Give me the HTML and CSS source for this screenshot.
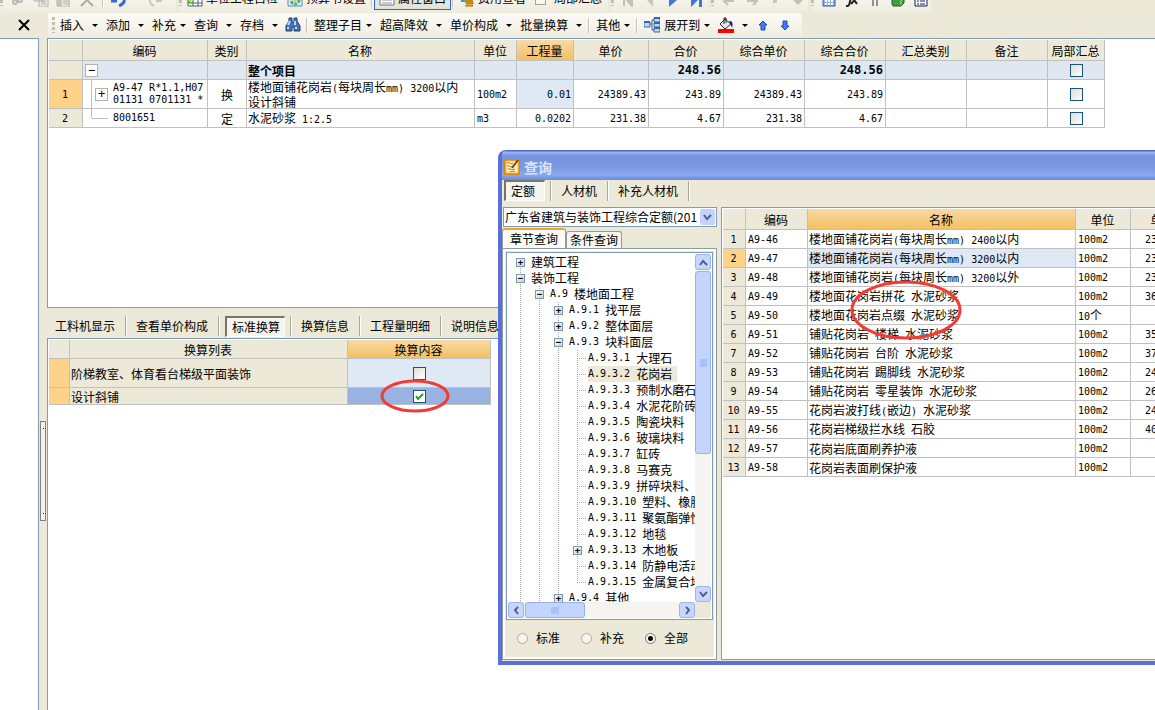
FILE: index.html
```html
<!DOCTYPE html>
<html lang="zh-CN">
<head>
<meta charset="utf-8">
<title>查询</title>
<link rel="stylesheet" href="styles.css">
</head>
<body>
<div class="app">
  <div class="strip">
    <div class="bar bar-top bar-first">
      <span class="grip"></span>
      <svg class="ic" viewBox="0 0 16 16"><path d="M6 0v9M10 0v7" stroke="#bbb9ae" stroke-width="2"/><circle cx="5" cy="11" r="2" fill="none" stroke="#bbb9ae" stroke-width="2"/><circle cx="10" cy="9" r="2" fill="none" stroke="#bbb9ae" stroke-width="2"/></svg>
      <svg class="ic" viewBox="0 0 16 16"><path d="M1 2h9v8H1zM6 6h9v10H6z" fill="#eceade" stroke="#b5b3a8"/><path d="M8 9h5M8 11h5M8 13h5" stroke="#b5b3a8"/></svg>
      <svg class="ic" viewBox="0 0 16 16"><path d="M1 1h12v14H1z" fill="#c9c7bc" stroke="#b5b3a8"/><path d="M5 5h8v11H5z" fill="#eceade" stroke="#b5b3a8"/><path d="M7 9h5M7 11h5M7 13h5" stroke="#b5b3a8"/></svg>
      <svg class="ic" viewBox="0 0 16 16"><path d="M2 3l12 12M14 3L2 15" stroke="#aeaca2" stroke-width="2"/></svg>
      <span class="sep"></span>
      <svg class="ic" viewBox="0 0 16 16"><path d="M1 5v5h5M2 10c4-6 13-6 11 1-1 2-3 3-5 4" stroke="#3169d6" stroke-width="3" fill="none"/></svg>
      <span class="arrow"></span>
      <svg class="ic" viewBox="0 0 16 16"><path d="M14 5v5H9M13 9C8 4 2 6 3 10c0 2 2 4 4 5" stroke="#c9c7bc" stroke-width="2" fill="none"/></svg>
      <span class="arrow dim"></span>
    </div>
    <div class="bar bar-top">
      <span class="grip"></span>
      <button class="tool"><svg class="ic" viewBox="0 0 16 16"><path d="M1 2h14v13H1z" fill="#fff" stroke="#55606f"/><path d="M1 12h14M6 2v13M11 2v13M1 8h14" stroke="#55606f"/><path d="M1 6h5v6H1z" fill="#6bb03c"/><path d="M2 9l2 2 2-4" stroke="#fff" fill="none"/></svg>单位工程自检</button>
      <button class="tool"><svg class="ic" viewBox="0 0 16 16"><path d="M1 1h14v14H1z" fill="#e9f3fb" stroke="#4f87c4"/><circle cx="8" cy="9" r="4" fill="none" stroke="#58ad63" stroke-width="3" stroke-dasharray="3 1"/><circle cx="8" cy="9" r="2" fill="#a9d9ab"/></svg>预算书设置</button>
      <span class="sep"></span>
      <button class="tool framed"><svg class="ic" viewBox="0 0 16 16"><path d="M1 1h14v13H1z" fill="#fff" stroke="#6f7785"/><path d="M3 7h10M3 9h10M3 12h10" stroke="#8e959f"/></svg>属性窗口</button>
      <span class="sep"></span>
      <button class="tool"><svg class="ic" viewBox="0 0 16 16"><path d="M2 5h7v6H2z" fill="#3f93d1"/><path d="M5 7h9v8H7z" fill="#e3ac35"/><path d="M6 10h8M7 12h8M6 15h8" stroke="#9c6a13"/></svg>费用查看</button>
      <label class="tool check-tool"><input type="checkbox" class="plain">局部汇总</label>
    </div>
    <div class="bar bar-top nav">
      <span class="grip"></span>
      <svg class="ic" viewBox="0 0 16 16"><path d="M3 4v11M11 4v11L5 8z" fill="#c3c1b6" stroke="#c3c1b6" stroke-width="2"/></svg>
      <svg class="ic" viewBox="0 0 16 16"><path d="M9 3v13L3 9z" fill="#c9c7bc"/></svg>
      <svg class="ic" viewBox="0 0 16 16"><path d="M2 3v13l8-7z" fill="#3f78d8"/></svg>
      <svg class="ic" viewBox="0 0 16 16"><path d="M1 3v13l7-7zM9 3h3v13H9z" fill="#3f78d8"/></svg>
    </div>
    <div class="bar bar-top nav">
      <span class="grip"></span>
      <svg class="ic" viewBox="0 0 16 16"><path d="M3 10h10M7 6l-4 4 4 4" stroke="#c3c1b6" stroke-width="2" fill="none"/></svg>
      <svg class="ic" viewBox="0 0 16 16"><path d="M3 10h10M9 6l4 4-4 4" stroke="#c3c1b6" stroke-width="2" fill="none"/></svg>
      <svg class="ic" viewBox="0 0 16 16"><path d="M6 3h4v9H6z" fill="#c9c7bc"/></svg>
      <svg class="ic" viewBox="0 0 16 16"><path d="M3 9h10l-5 5z" fill="#c3c1b6"/></svg>
    </div>
    <div class="bar bar-top nav">
      <span class="grip"></span>
      <svg class="ic" viewBox="0 0 16 16"><path d="M2 1h12v14H2z" fill="#8fb2e6" stroke="#3a5a9c"/><path d="M4 7h8M4 10h8M4 13h8" stroke="#fff" stroke-width="2" stroke-dasharray="2 1"/></svg>
      <svg class="ic" viewBox="0 0 16 16"><path d="M2 15c5 1 3-6 6-11M8 6l5 7M13 6l-6 7" stroke="#222" stroke-width="2" fill="none"/></svg>
      <svg class="ic" viewBox="0 0 16 16"><path d="M6 5v10M10 5v10M4 5h8" stroke="#333"/></svg>
      <svg class="ic" viewBox="0 0 16 16"><path d="M2 4l9-2 3 2v8l-3 3H3l-1-2z" fill="#3f9d43" stroke="#1f5c26"/><path d="M11 5v9" stroke="#a9dca8"/></svg>
      <svg class="ic" viewBox="0 0 16 16"><path d="M2 2h12v13H2z" fill="#fff" stroke="#111a66"/><path d="M4 7h2M7 7h5M4 10h2M7 10h5M4 13h2M7 13h5" stroke="#111a66"/></svg>
    </div>
  </div>

  <div class="toolrow">
    <button class="closer" aria-label="关闭"><svg width="14" height="14" viewBox="0 0 14 14"><path d="M2 2l10 10M12 2L2 12" stroke="#000" stroke-width="2"/></svg></button>
    <div class="bar bar-main">
      <span class="grip"></span>
      <button class="tool">插入<span class="arrow"></span></button>
      <button class="tool">添加<span class="arrow"></span></button>
      <button class="tool tight">补充<span class="arrow"></span></button>
      <button class="tool">查询<span class="arrow"></span></button>
      <button class="tool">存档<span class="arrow"></span></button>
      <button class="tool slim" aria-label="查找"><svg class="ic" viewBox="0 0 16 16"><path d="M4 1h3v3l1 2 1-2V1h3v3l3 5v5H9v-4H7v4H1V9l3-5z" fill="#4672b4" stroke="#20427c"/><path d="M3 8l2-4M10 8V4M3 12v-2M11 12v-2" stroke="#bcd8f6" stroke-width="2"/></svg></button>
      <span class="sep"></span>
      <button class="tool tight">整理子目<span class="arrow"></span></button>
      <button class="tool">超高降效<span class="arrow"></span></button>
      <button class="tool">单价构成<span class="arrow"></span></button>
      <button class="tool">批量换算<span class="arrow"></span></button>
      <span class="sep"></span>
      <button class="tool tight">其他<span class="arrow"></span></button>
      <span class="sep"></span>
      <button class="tool tight"><svg class="ic" viewBox="0 0 16 16"><path d="M6 7h2M8 3v10M8 3h2M8 13h2" stroke="#3a62a8" fill="none"/><path d="M0 5h6v5H0zM10 1h6v4h-6zM10 6h6v4h-6zM10 11h6v4h-6z" fill="#b9dcf8" stroke="#3a62a8"/><path d="M0 5h6M10 1h6M10 6h6M10 11h6" stroke="#3a62a8" stroke-width="2"/></svg>展开到<span class="arrow"></span></button>
      <button class="tool" aria-label="填充颜色"><svg class="ic" viewBox="0 0 16 16"><path d="M7 2l6 5-6 5-5-5z" fill="#e8e8e8" stroke="#222"/><path d="M6 7V1h2v5" stroke="#222" fill="none"/><path d="M12 4c3 0 3 4 2 7-1-2-1-4-3-6z" fill="#12248f"/><path d="M0 12h16v4H0z" fill="#f00"/></svg><span class="arrow"></span></button>
      <button class="tool slim" aria-label="上移"><svg class="ic" viewBox="0 0 16 16"><path d="M8 4l4 4h-2v5H6V8H4z" fill="#3f7df0" stroke="#1c4bb0"/></svg></button>
      <button class="tool slim" aria-label="下移"><svg class="ic" viewBox="0 0 16 16"><path d="M8 13l4-4h-2V4H6v5H4z" fill="#3f7df0" stroke="#1c4bb0"/></svg></button>
    </div>
  </div>

  <div class="work">
    <div class="side"></div>
    <div class="split"><div class="handle"><i></i><i></i></div></div>
    <main class="main">
      <section class="panel upper">
        <table class="grid items">
          <colgroup><col class="w34"><col class="w125"><col class="w39"><col class="w228"><col class="w42"><col class="w57"><col class="w75"><col class="w75"><col class="w81"><col class="w81"><col class="w81"><col class="w81"><col class="w57"></colgroup>
          <tr class="h21"><th></th><th>编码</th><th>类别</th><th>名称</th><th>单位</th><th class="hot">工程量</th><th>单价</th><th>合价</th><th>综合单价</th><th>综合合价</th><th>汇总类别</th><th>备注</th><th>局部汇总</th></tr>
          <tr class="h19 total"><th></th><td><button class="box big in1" aria-label="折叠">−</button></td><td></td><td><b>整个项目</b></td><td></td><td></td><td></td><td class="num">248.56</td><td></td><td class="num">248.56</td><td></td><td></td><td class="mid"><input type="checkbox" aria-label="局部汇总"></td></tr>
          <tr class="h29"><th class="pick m">1</th><td class="branch"><div class="codecell"><button class="box big in2" aria-label="展开">+</button><span class="m">A9-47 R*1.1,H07<br>01131 0701131 *</span></div></td><td class="mid">换</td><td class="two">楼地面铺花岗岩<span class="m">(</span>每块周长<span class="m">mm) 3200</span>以内<br>设计斜铺</td><td class="m">100m2</td><td class="num soft">0.01</td><td class="num">24389.43</td><td class="num">243.89</td><td class="num">24389.43</td><td class="num">243.89</td><td></td><td></td><td class="mid"><input type="checkbox" aria-label="局部汇总"></td></tr>
          <tr class="h19"><th class="m">2</th><td class="branch leaf"><div class="codecell"><i class="stub"></i><span class="m">8001651</span></div></td><td class="mid">定</td><td>水泥砂浆<span class="m"> 1:2.5</span></td><td class="m">m3</td><td class="num">0.0202</td><td class="num">231.38</td><td class="num">4.67</td><td class="num">231.38</td><td class="num">4.67</td><td></td><td></td><td class="mid"><input type="checkbox" aria-label="局部汇总"></td></tr>
        </table>
      </section>
      <nav class="tabs low">
        <button>工料机显示</button><button>查看单价构成</button><button class="on">标准换算</button><button>换算信息</button><button>工程量明细</button><button>说明信息</button>
      </nav>
      <section class="panel lower">
        <table class="grid conv">
          <colgroup><col class="w21"><col class="w278"><col class="w143"></colgroup>
          <tr class="h19"><th></th><th>换算列表</th><th class="hot">换算内容</th></tr>
          <tr class="h29"><th class="pick"></th><td class="beige"><label for="c1">阶梯教室、体育看台梯级平面装饰</label></td><td class="mid soft"><input type="checkbox" id="c1"></td></tr>
          <tr class="h17"><th class="pick"></th><td class="beige"><label for="c2">设计斜铺</label></td><td class="mid sel"><input type="checkbox" id="c2" checked></td></tr>
        </table>
      </section>
    </main>
  </div>

  <div class="dialog" role="dialog" aria-labelledby="dlg">
    <header class="title">
      <svg class="ic" viewBox="0 0 16 16"><path d="M0 0h16v16H0z" fill="#d98a12"/><path d="M2 2h12v12H2z" fill="#fff3cf" stroke="#f0bc45"/><path d="M3 4c3-1 3 2 6 0M3 7c3-1 3 2 6 0M4 10c3-1 3 2 7 0M6 13c2-1 3 0 5-1" stroke="#b86b0b" fill="none" stroke-width="1"/><path d="M14 1L8 9" stroke="#8b3f05" stroke-width="2"/></svg>
      <span id="dlg">查询</span>
    </header>
    <div class="dbody">
      <nav class="tabs top"><button class="on">定额</button><button>人材机</button><button>补充人材机</button></nav>
      <div class="cols">
        <div class="left">
          <div class="combo">
            <select aria-label="定额库"><option>广东省建筑与装饰工程综合定额(201</option></select>
            <span class="drop"><svg width="9" height="7" viewBox="0 0 9 7"><path d="M1 1l3 4 4-4" fill="none" stroke="#4d6185" stroke-width="2"/></svg></span>
          </div>
          <div class="ptabs"><button class="cur">章节查询</button><button>条件查询</button></div>
          <div class="pane">
            <div class="treebox">
              <div class="treerow">
                <ul class="tree">
                  <li class="first"><div class="n"><button class="box" aria-label="展开">+</button>建筑工程</div></li>
                  <li><div class="n"><button class="box" aria-label="折叠">−</button>装饰工程</div>
                    <ul>
                      <li><div class="n"><button class="box" aria-label="折叠">−</button><span class="m">A.9 </span>楼地面工程</div>
                        <ul>
                          <li><div class="n"><button class="box" aria-label="展开">+</button><span class="m">A.9.1 </span>找平层</div></li>
                          <li><div class="n"><button class="box" aria-label="展开">+</button><span class="m">A.9.2 </span>整体面层</div></li>
                          <li><div class="n"><button class="box" aria-label="折叠">−</button><span class="m">A.9.3 </span>块料面层</div>
                            <ul>
                              <li><div class="n leaf"><span class="m">A.9.3.1 </span>大理石</div></li>
                              <li><div class="n leaf"><mark><span class="m">A.9.3.2 </span>花岗岩</mark></div></li>
                              <li><div class="n leaf"><span class="m">A.9.3.3 </span>预制水磨石</div></li>
                              <li><div class="n leaf"><span class="m">A.9.3.4 </span>水泥花阶砖</div></li>
                              <li><div class="n leaf"><span class="m">A.9.3.5 </span>陶瓷块料</div></li>
                              <li><div class="n leaf"><span class="m">A.9.3.6 </span>玻璃块料</div></li>
                              <li><div class="n leaf"><span class="m">A.9.3.7 </span>缸砖</div></li>
                              <li><div class="n leaf"><span class="m">A.9.3.8 </span>马赛克</div></li>
                              <li><div class="n leaf"><span class="m">A.9.3.9 </span>拼碎块料、</div></li>
                              <li><div class="n leaf"><span class="m">A.9.3.10 </span>塑料、橡胶</div></li>
                              <li><div class="n leaf"><span class="m">A.9.3.11 </span>聚氨酯弹性</div></li>
                              <li><div class="n leaf"><span class="m">A.9.3.12 </span>地毯</div></li>
                              <li><div class="n"><button class="box" aria-label="展开">+</button><span class="m">A.9.3.13 </span>木地板</div></li>
                              <li><div class="n leaf"><span class="m">A.9.3.14 </span>防静电活动</div></li>
                              <li class="end"><div class="n leaf"><span class="m">A.9.3.15 </span>金属复合地</div></li>
                            </ul>
                          </li>
                          <li><div class="n"><button class="box" aria-label="展开">+</button><span class="m">A.9.4 </span>其他</div></li>
                        </ul>
                      </li>
                    </ul>
                  </li>
                </ul>
                <div class="vbar">
                  <button class="sb" aria-label="向上"><svg width="9" height="7" viewBox="0 0 9 7"><path d="M1 6l3-4 4 4" fill="none" stroke="#4d6185" stroke-width="2"/></svg></button>
                  <div class="vthumb"><svg width="7" height="8" viewBox="0 0 7 8"><path d="M0 1h7M0 3h7M0 5h7M0 7h7" stroke="#8cb0f8"/></svg></div>
                  <span class="grow"></span>
                  <button class="sb" aria-label="向下"><svg width="9" height="7" viewBox="0 0 9 7"><path d="M1 1l3 4 4-4" fill="none" stroke="#4d6185" stroke-width="2"/></svg></button>
                </div>
              </div>
              <div class="hbar">
                <button class="sb" aria-label="向左"><svg width="7" height="9" viewBox="0 0 7 9"><path d="M5 1L2 4l3 4" fill="none" stroke="#4d6185" stroke-width="2"/></svg></button>
                <div class="hthumb"><svg width="8" height="7" viewBox="0 0 8 7"><path d="M1 0v7M3 0v7M5 0v7M7 0v7" stroke="#8cb0f8"/></svg></div>
                <span class="grow"></span>
                <button class="sb" aria-label="向右"><svg width="7" height="9" viewBox="0 0 7 9"><path d="M2 1l3 3-3 4" fill="none" stroke="#4d6185" stroke-width="2"/></svg></button>
                <span class="corner"></span>
              </div>
            </div>
            <div class="radios">
              <label><input type="radio" name="scope">标准</label>
              <label><input type="radio" name="scope">补充</label>
              <label><input type="radio" name="scope" checked>全部</label>
            </div>
          </div>
        </div>
        <div class="right">
          <table class="grid quota">
            <colgroup><col class="w23"><col class="w62"><col class="w268"><col class="w55"><col class="w65"></colgroup>
            <tr class="h21"><th></th><th>编码</th><th class="hot">名称</th><th>单位</th><th>单价</th></tr>
            <tr class="h19"><th class="m">1</th><td class="m">A9-46</td><td>楼地面铺花岗岩<span class="m">(</span>每块周长<span class="m">mm) 2400</span>以内</td><td class="m">100m2</td><td class="m cut">23</td></tr>
            <tr class="h19"><th class="m pick">2</th><td class="m">A9-47</td><td class="soft">楼地面铺花岗岩<span class="m">(</span>每块周长<span class="m">mm) 3200</span>以内</td><td class="m">100m2</td><td class="m cut">23</td></tr>
            <tr class="h19"><th class="m">3</th><td class="m">A9-48</td><td>楼地面铺花岗岩<span class="m">(</span>每块周长<span class="m">mm) 3200</span>以外</td><td class="m">100m2</td><td class="m cut">23</td></tr>
            <tr class="h19"><th class="m">4</th><td class="m">A9-49</td><td>楼地面花岗岩拼花<span class="m"> </span>水泥砂浆</td><td class="m">100m2</td><td class="m cut">36</td></tr>
            <tr class="h19"><th class="m">5</th><td class="m">A9-50</td><td>楼地面花岗岩点缀<span class="m"> </span>水泥砂浆</td><td class="u"><span class="m">10</span>个</td><td></td></tr>
            <tr class="h19"><th class="m">6</th><td class="m">A9-51</td><td>铺贴花岗岩<span class="m"> </span>楼梯<span class="m"> </span>水泥砂浆</td><td class="m">100m2</td><td class="m cut">35</td></tr>
            <tr class="h19"><th class="m">7</th><td class="m">A9-52</td><td>铺贴花岗岩<span class="m"> </span>台阶<span class="m"> </span>水泥砂浆</td><td class="m">100m2</td><td class="m cut">37</td></tr>
            <tr class="h19"><th class="m">8</th><td class="m">A9-53</td><td>铺贴花岗岩<span class="m"> </span>踢脚线<span class="m"> </span>水泥砂浆</td><td class="m">100m2</td><td class="m cut">24</td></tr>
            <tr class="h19"><th class="m">9</th><td class="m">A9-54</td><td>铺贴花岗岩<span class="m"> </span>零星装饰<span class="m"> </span>水泥砂浆</td><td class="m">100m2</td><td class="m cut">26</td></tr>
            <tr class="h19"><th class="m">10</th><td class="m">A9-55</td><td>花岗岩波打线<span class="m">(</span>嵌边<span class="m">) </span>水泥砂浆</td><td class="m">100m2</td><td class="m cut">24</td></tr>
            <tr class="h19"><th class="m">11</th><td class="m">A9-56</td><td>花岗岩梯级拦水线<span class="m"> </span>石胶</td><td class="m">100m2</td><td class="m cut">40</td></tr>
            <tr class="h19"><th class="m">12</th><td class="m">A9-57</td><td>花岗岩底面刷养护液</td><td class="m">100m2</td><td></td></tr>
            <tr class="h19"><th class="m">13</th><td class="m">A9-58</td><td>花岗岩表面刷保护液</td><td class="m">100m2</td><td></td></tr>
          </table>
        </div>
      </div>
    </div>
  </div>

  <svg class="marks" width="1155" height="710" viewBox="0 0 1155 710"><g fill="none" stroke="#f23b37" stroke-width="3"><ellipse cx="415" cy="396" rx="33" ry="15"/><ellipse cx="906" cy="310" rx="54" ry="28"/></g></svg>
</div>
</body>
</html>
```

FILE: styles.css
```css
* { box-sizing: border-box; }
html, body { height: 100%; }
body {
  margin: 0;
  overflow: hidden;
  background: #ece9d8;
  color: #000;
  font: 12px/14px "Noto Sans CJK SC", sans-serif;
}
button, select, input { font: inherit; color: inherit; margin: 0; padding: 0; }
button { border: 0; background: none; white-space: nowrap; }
svg { display: block; flex: none; }
.m, .num { font-family: "DejaVu Sans Mono", "Noto Sans CJK SC", monospace; font-size: 10px; white-space: pre; }
.app { position: relative; display: flex; flex-direction: column; height: 100vh; overflow: hidden; }

/* toolbars */
.strip { display: flex; gap: 3px; height: 12px; overflow: hidden; align-items: flex-end; flex: none; }
.bar { display: flex; align-items: center; background: linear-gradient(#fcfbf7, #efecdf); border-radius: 3px; flex: none; }
.bar-top { height: 26px; padding: 0 2px 2px 0; gap: 1px; }
.bar-top .grip { margin-right: 0; }
.bar-top .ic { margin-top: 2px; }
.bar-first { gap: 7px; padding-right: 0; }
.bar-top .tool { gap: 3px; padding: 0 4px; height: 18px; }
.bar-top .sep { height: 18px; }
.bar-top .framed { height: 24px; border: 1px solid #316ac5; background: #e5e4dc; }
.bar-top.nav { gap: 7px; }
.grip { width: 3px; height: 16px; margin-right: 1px; background: repeating-linear-gradient(#c1beb0 0 3px, transparent 3px 5px); flex: none; }
.sep { width: 2px; height: 15px; background: #c5c2b3; border-right: 1px solid #fff; flex: none; }
.ic { width: 16px; height: 16px; }
.arrow { width: 0; height: 0; border: 3px solid transparent; border-top-color: #000; border-bottom-width: 0; flex: none; }
.arrow.dim { border-top-color: #bbb9ae; }
.toolrow { display: flex; align-items: center; height: 26px; flex: none; }
.closer { width: 48px; display: flex; justify-content: center; }
.bar-main { height: 25px; padding: 0 6px 0 4px; }
.bar-main .sep { margin: 0 2px; }
.tool { display: flex; align-items: center; gap: 8px; padding: 0 4px; }
.tool.tight { gap: 4px; }
.tool.slim { padding: 0 3px; }
.plain { appearance: none; width: 11px; height: 13px; border: 1px solid #a3a196; background: #f8f7f1; }
.bar-top .check-tool { gap: 8px; }

/* work area */
.work { display: flex; flex: 1; min-height: 0; }
.side { width: 39px; background: #fff; border: 1px solid #7f9db9; border-width: 1px 1px 0 0; flex: none; }
.split { width: 8px; display: flex; flex-direction: column; align-items: center; padding-top: 383px; flex: none; }
.handle { width: 6px; height: 100px; border: 1px solid #84827a; background: #f4f2e8; display: flex; flex-direction: column; justify-content: space-between; align-items: center; padding: 6px 0; }
.handle i { width: 1px; height: 1px; background: #000080; }
.main { flex: 1; min-width: 0; display: flex; flex-direction: column; }
.panel { background: #fff; border: 1px solid #7f9db9; border-right: 0; padding: 1px 0 0 1px; overflow: hidden; }
.upper { height: 270px; flex: none; }
.lower { flex: 1; border-bottom: 0; }

/* grids */
.grid { border-collapse: separate; border-spacing: 0; table-layout: fixed; line-height: 13px; }
.items { width: 1056px; }
.conv { width: 442px; }
.quota { width: 473px; }
.grid th, .grid td { padding: 0 2px 0 1px; border: 0 solid #c0c0c0; border-width: 0 1px 1px 0; font-weight: normal; text-align: left; white-space: nowrap; overflow: hidden; }
.grid th { background: #ece9d8; text-align: center; }
.grid td.m, .grid td.num, .grid td.u { padding: 0 2px; }
.grid td.num { text-align: right; }
.grid td.mid { text-align: center; padding: 0 1px; }
.grid td.cut { padding-left: 14px; }
.grid th.pick { background: #ffd28a; }
.grid th.hot { background: linear-gradient(#fad9a3, #f2c062); }
.grid td.soft { background: #dfe9f6; }
.grid td.sel { background: #98b3e1; }
.grid td.beige { background: #ece9d8; }
.total td { background: #dfe7f1; }
.total .num { font-weight: bold; font-size: 12px; }
.h17 { height: 17px; } .h19 { height: 19px; } .h21 { height: 21px; } .h29 { height: 29px; }
.w21 { width: 21px; } .w23 { width: 23px; } .w34 { width: 34px; } .w39 { width: 39px; } .w42 { width: 42px; }
.w55 { width: 55px; } .w57 { width: 57px; } .w62 { width: 62px; } .w65 { width: 65px; } .w75 { width: 75px; }
.w81 { width: 81px; } .w125 { width: 125px; } .w143 { width: 143px; } .w228 { width: 228px; } .w268 { width: 268px; } .w278 { width: 278px; }
.codecell { display: flex; align-items: center; gap: 5px; }
.codecell .m { line-height: 12px; }
.in1 { margin-left: 1px; }
.in2 { margin-left: 11px; }
.stub { width: 16px; height: 1px; background: #c0c0c0; margin-left: 8px; }
.branch { background: linear-gradient(#c0c0c0, #c0c0c0) 8px 0 / 1px 100% no-repeat; }
.branch.leaf { background-size: 1px 50%; }
input[type=checkbox]:not(.plain) { appearance: none; display: block; width: 13px; height: 13px; margin: 0 auto; border: 1px solid #1c5180; background: linear-gradient(135deg, #dcdcd7, #fff); }
input[type=checkbox]:not(.plain):checked { background: #fff url("data:image/svg+xml,%3Csvg xmlns='http://www.w3.org/2000/svg' viewBox='0 0 11 11'%3E%3Cpath d='M2 5l2 3 5-5' fill='none' stroke='%2321a121' stroke-width='2'/%3E%3C/svg%3E") center / 11px 11px no-repeat; }
.box { display: flex; align-items: center; justify-content: center; width: 9px; height: 9px; border: 1px solid #7898b5; background: linear-gradient(135deg, #fff, #d3cec0); font: bold 9px/7px "DejaVu Sans Mono", monospace; flex: none; }
.box.big { width: 13px; height: 13px; border-color: #b5b3a8; background: #fff; font-size: 12px; font-weight: normal; line-height: 11px; }

/* flat tabs */
.tabs { display: flex; align-items: center; flex: none; }
.tabs button { height: 20px; padding: 0 10px; border: 0 solid #aca899; border-right-width: 1px; box-shadow: 1px 0 #fff; }
.tabs button.on { height: 21px; padding: 0 4px 0 5px; margin: 0 5px 0 6px; border: 1px solid #77756b; border-width: 2px 1px 1px 2px; border-right-color: #fff; border-bottom-color: #fff; background: #f6f4ee; box-shadow: none; }
.tabs button.on + button { border-left-width: 1px; box-shadow: inset 1px 0 #fff, 1px 0 #fff; }
.low { width: 451px; height: 30px; padding-top: 6px; overflow: hidden; }
.low button:first-child { padding-left: 8px; }
.top { height: 21px; padding: 0 2px; }
.tabs.top button.on { margin-left: 0; padding-right: 9px; }

/* query window */
.dialog { position: absolute; left: 498px; right: 0; top: 150px; border: solid #5a6fd8; border-width: 0 0 4px 4px; border-radius: 8px 0 0 0; overflow: hidden; background: #ece9d8; }
.title { display: flex; align-items: center; gap: 4px; height: 30px; padding: 3px 2px 0; color: #dce6fb; font-size: 14px; font-weight: bold; background: linear-gradient(#4d68cf 0 1px, #9cb7f0 2px, #7593de 6px, #7d99e2 18px, #86abed 25px, #6d88da 30px); }
.dbody { padding-bottom: 1px; }
.cols { display: flex; gap: 4px; padding-top: 6px; }
.left { width: 215px; flex: none; }
.combo { display: flex; height: 20px; margin-left: 1px; border: 1px solid #7f9db9; background: #fff; padding: 1px; }
.combo select { appearance: none; flex: 1; min-width: 0; border: 0; background: none; }
.drop { display: flex; align-items: center; justify-content: center; width: 15px; background: #c3d3fd; border-radius: 2px; flex: none; }
.ptabs { display: flex; align-items: flex-end; height: 21px; padding-top: 1px; }
.ptabs button { height: 17px; padding: 0 3px; border: 1px solid #919b9c; border-bottom: 0; border-radius: 3px 3px 0 0; background: #f7f6f0; }
.ptabs .cur { height: 20px; padding: 0 7px; border-top: 2px solid #f4a62a; background: #fcfbf8; }
.pane { padding: 3px; border: 1px solid #919b9c; box-shadow: inset 0 0 0 2px #fff; }
.treebox { border: 1px solid #7f9db9; background: #fff; padding: 1px; }
.treerow { display: flex; height: 348px; }
.tree { flex: 1; min-width: 0; overflow: hidden; padding-left: 8px; }
.tree, .tree ul { margin: 0; list-style: none; }
.tree ul { padding-left: 19px; }
.tree li { background: repeating-linear-gradient(#aca899 0 1px, transparent 1px 2px) 4px 0 / 1px 100% no-repeat; }
.tree li.first { background-position: 4px 8px; }
.tree li.end { background-size: 1px 8px; }
.n { display: flex; align-items: center; height: 16px; white-space: nowrap; }
.n .box { margin-right: 6px; }
.n.leaf { padding-left: 15px; background: repeating-linear-gradient(90deg, #aca899 0 1px, transparent 1px 2px) 4px 8px / 9px 1px no-repeat; }
.n mark { display: flex; align-items: center; height: 16px; padding-right: 5px; background: #ece9d8; color: inherit; flex: none; }
.vbar { display: flex; flex-direction: column; width: 16px; background: #f5f4f0; flex: none; }
.sb { display: flex; align-items: center; justify-content: center; width: 16px; height: 16px; border: 1px solid #9bb3e6; border-radius: 3px; background: #c6d6fd; flex: none; }
.grow { flex: 1; }
.vthumb, .hthumb { display: flex; align-items: center; justify-content: center; border: 1px solid #98b0e8; border-radius: 3px; background: #c3d4fd; flex: none; }
.vthumb { height: 183px; margin-top: 1px; }
.hbar { display: flex; height: 16px; background: #f5f4f0; }
.hthumb { width: 60px; margin-left: 1px; }
.corner { width: 16px; background: #ece9d8; }
.radios { display: flex; gap: 20px; align-items: center; height: 36px; padding-left: 11px; }
.radios label { display: flex; align-items: center; gap: 8px; width: 44px; flex: none; }
input[type=radio] { appearance: none; width: 11px; height: 11px; border: 1px solid #aca899; border-radius: 50%; background: #f6f5ef; flex: none; }
input[type=radio]:checked { background: radial-gradient(circle, #000 0 2px, #f6f5ef 3px); border-color: #777; }
.right { flex: 1; min-width: 0; overflow: hidden; border: 1px solid #7f9db9; border-right: 0; padding: 1px 0 0 1px; background: #fff; }

.marks { position: absolute; left: 0; top: 0; pointer-events: none; }
```
